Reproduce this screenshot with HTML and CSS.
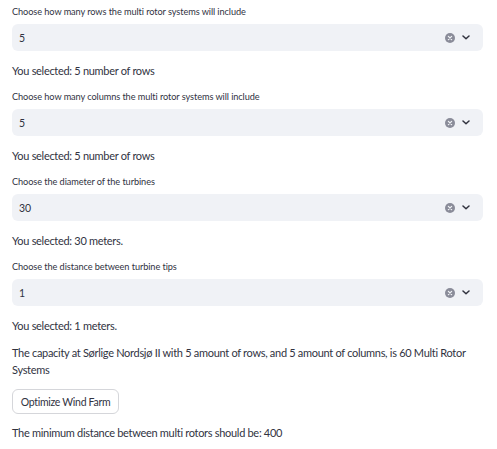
FILE: index.html
```html
<!DOCTYPE html>
<html>
<head>
<meta charset="utf-8">
<link rel="stylesheet" href="styles.css">
</head>
<body>
<main class="app">
  <section class="field">
    <label class="label">Choose how many rows the multi rotor systems will include</label>
    <div class="select">
      <span class="value">5</span>
      <span class="icons">
        <svg class="clear" width="10" height="10" viewBox="0 0 10 10"><circle cx="5" cy="5" r="5" fill="#8a8c99"/><path d="M3.4 3.4 L6.6 6.6 M6.6 3.4 L3.4 6.6" stroke="#f0f2f6" stroke-width="1.3" stroke-linecap="round"/></svg>
        <svg class="chev" width="8" height="5" viewBox="0 0 8 5"><path d="M1 1 L4 3.8 L7 1" fill="none" stroke="#31333f" stroke-width="1.5" stroke-linecap="round" stroke-linejoin="round"/></svg>
      </span>
    </div>
  </section>
  <p class="text">You selected: 5 number of rows</p>

  <section class="field">
    <label class="label">Choose how many columns the multi rotor systems will include</label>
    <div class="select">
      <span class="value">5</span>
      <span class="icons">
        <svg class="clear" width="10" height="10" viewBox="0 0 10 10"><circle cx="5" cy="5" r="5" fill="#8a8c99"/><path d="M3.4 3.4 L6.6 6.6 M6.6 3.4 L3.4 6.6" stroke="#f0f2f6" stroke-width="1.3" stroke-linecap="round"/></svg>
        <svg class="chev" width="8" height="5" viewBox="0 0 8 5"><path d="M1 1 L4 3.8 L7 1" fill="none" stroke="#31333f" stroke-width="1.5" stroke-linecap="round" stroke-linejoin="round"/></svg>
      </span>
    </div>
  </section>
  <p class="text">You selected: 5 number of rows</p>

  <section class="field">
    <label class="label">Choose the diameter of the turbines</label>
    <div class="select">
      <span class="value">30</span>
      <span class="icons">
        <svg class="clear" width="10" height="10" viewBox="0 0 10 10"><circle cx="5" cy="5" r="5" fill="#8a8c99"/><path d="M3.4 3.4 L6.6 6.6 M6.6 3.4 L3.4 6.6" stroke="#f0f2f6" stroke-width="1.3" stroke-linecap="round"/></svg>
        <svg class="chev" width="8" height="5" viewBox="0 0 8 5"><path d="M1 1 L4 3.8 L7 1" fill="none" stroke="#31333f" stroke-width="1.5" stroke-linecap="round" stroke-linejoin="round"/></svg>
      </span>
    </div>
  </section>
  <p class="text">You selected: 30 meters.</p>

  <section class="field">
    <label class="label">Choose the distance between turbine tips</label>
    <div class="select">
      <span class="value">1</span>
      <span class="icons">
        <svg class="clear" width="10" height="10" viewBox="0 0 10 10"><circle cx="5" cy="5" r="5" fill="#8a8c99"/><path d="M3.4 3.4 L6.6 6.6 M6.6 3.4 L3.4 6.6" stroke="#f0f2f6" stroke-width="1.3" stroke-linecap="round"/></svg>
        <svg class="chev" width="8" height="5" viewBox="0 0 8 5"><path d="M1 1 L4 3.8 L7 1" fill="none" stroke="#31333f" stroke-width="1.5" stroke-linecap="round" stroke-linejoin="round"/></svg>
      </span>
    </div>
  </section>
  <p class="text">You selected: 1 meters.</p>

  <p class="text para">The capacity at Sørlige Nordsjø II with 5 amount of rows, and 5 amount of columns, is 60 Multi Rotor Systems</p>

  <button class="btn">Optimize Wind Farm</button>

  <p class="text final">The minimum distance between multi rotors should be: 400</p>
</main>
</body>
</html>
```

FILE: styles.css
```css
html, body {
  margin: 0;
  padding: 0;
  background: #ffffff;
}
body {
  font-family: Lato, "Open Sans", sans-serif;
  color: #31333f;
}
.app {
  width: 471px;
  padding: 4px 0 0 12px;
  display: flex;
  flex-direction: column;
  align-items: stretch;
}
.field {
  display: flex;
  flex-direction: column;
  gap: 4px;
}
.label {
  font-size: 9.2px;
  letter-spacing: -0.08px;
  line-height: 16px;
  height: 16px;
  display: block;
}
.select {
  height: 27px;
  background: #f0f2f6;
  border-radius: 6px;
  display: flex;
  align-items: center;
  justify-content: space-between;
  padding: 0 13px 0 7px;
}
.value {
  font-size: 10.5px;
}
.icons {
  display: flex;
  align-items: center;
  gap: 7px;
}
.icons svg { display: block; }
.text {
  margin: 10px 0 8px;
  font-size: 11px;
  letter-spacing: -0.3px;
  line-height: 20px;
}
.para {
  margin: 0 0 11px;
  line-height: 17px;
}
.btn {
  align-self: flex-start;
  font-family: inherit;
  font-size: 10.5px;
  letter-spacing: -0.3px;
  color: #31333f;
  background: #fff;
  border: 1px solid #d5d6da;
  border-radius: 6px;
  height: 25px;
  width: 107px;
  padding: 0;
  margin: 0;
}
.final {
  margin: 9px 0 0;
}
```
